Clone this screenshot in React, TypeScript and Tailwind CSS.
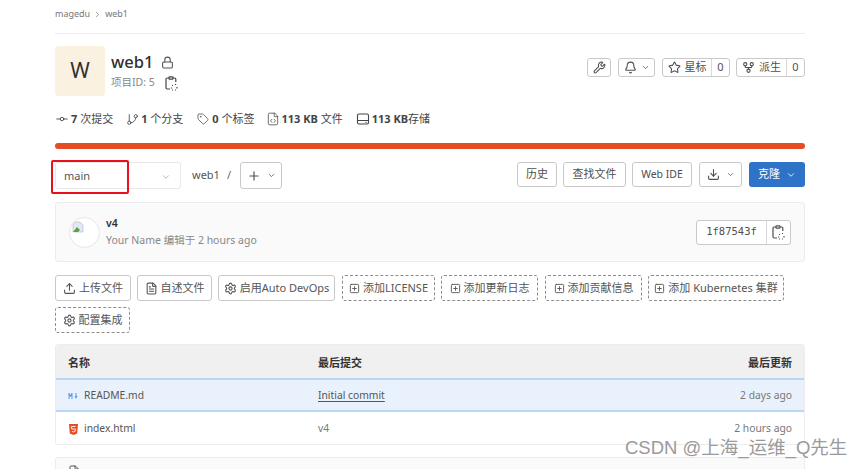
import React from 'react';
import {
  Lock, GitCommitHorizontal, GitBranch, Tag, FileCode, ChevronDown, ChevronRight,
  Plus, Wrench, Bell, Star, GitFork, Download, Upload, FileText, Settings, SquarePlus,
} from 'lucide-react';

const btn = 'flex items-center justify-center rounded-[3px] border border-[#c9c9c9] bg-white text-[#4f4f4f]';

// clipboard with the dashed corner, lucide has no match for this one
const CopyIcon = ({ className }: { className?: string }) => (
  <svg width="13" height="15" viewBox="0 0 13 15" fill="none" stroke="currentColor" strokeWidth="1.2" className={className}>
    <rect x="4" y="0.8" width="4" height="2.4" rx="0.6" />
    <path d="M4 2H2.2A1.2 1.2 0 0 0 1 3.2v8.6A1.2 1.2 0 0 0 2.2 13H5M8 2h1.6a1.2 1.2 0 0 1 1.2 1.2V6" />
    <path d="M7 9.5h1M10.5 8v1M12 11v1.5M7 14h1M10 14h1M6.5 11.5v1" />
  </svg>
);

const StorageIcon = () => (
  <svg width="14" height="14" viewBox="0 0 14 14" fill="none" stroke="currentColor" strokeWidth="1.1">
    <rect x="1.5" y="2" width="11" height="10" rx="1.5" />
    <path d="M1.5 8.5h11M9.5 10.3h1.2" />
  </svg>
);

const ActionButton = ({ icon, label, dashed, className }: { icon: React.ReactNode; label: string; dashed?: boolean; className: string }) => (
  <div className={`flex h-[26px] items-center justify-center gap-[3px] rounded-[3px] border bg-white text-[11px] text-[#555] ${dashed ? 'border-dashed border-[#8c8c8c]' : 'border-[#c9c9c9]'} ${className}`}>
    {icon}
    <span>{label}</span>
  </div>
);

const Stat = ({ icon, num, text, className }: { icon: React.ReactNode; num: string; text: string; className?: string }) => (
  <div className={`flex items-center gap-[2px] text-[11px] text-[#444] ${className ?? ''}`}>
    <span className="flex w-[14px] justify-center">{icon}</span>
    <span><b className="font-bold">{num}</b>{text}</span>
  </div>
);

const App = () => {
  return (
    <div className="relative h-[469px] w-[865px] overflow-hidden bg-white font-['Noto_Sans','Noto_Sans_CJK_SC',sans-serif]">
      <div className="ml-[55px] w-[750px]">
        {/* Breadcrumb */}
        <div className="flex h-[34px] items-center gap-[3px] border-b border-[#ececec] pb-[5px] text-[9px] text-[#777]">
          <span>magedu</span>
          <ChevronRight size={9} />
          <span>web1</span>
        </div>

        {/* Project header */}
        <div className="mt-3 flex items-start justify-between">
          <div className="flex gap-[6px]">
            <div className="flex h-[50px] w-[50px] items-center justify-center rounded-[4px] bg-[#fbf1e0] text-[21px] text-[#303030]">W</div>
            <div>
              <div className="flex h-[28px] items-center gap-[8px] pt-[5px] text-[16.5px] font-medium text-[#303030]">
                web1
                <Lock size={13} className="text-[#555]" />
              </div>
              <div className="flex items-center gap-[10px] text-[10.5px] leading-[17px] text-[#888]">
                <span>项目ID: 5</span>
                <CopyIcon className="mt-[2px] text-[#444]" />
              </div>
            </div>
          </div>
          <div className="mt-[12px] flex">
            <div className={`${btn} h-[19px] w-[24px]`}><Wrench size={13} /></div>
            <div className={`${btn} ml-[7px] h-[19px] w-[37px] gap-1`}><Bell size={13} /><ChevronDown size={9} /></div>
            <div className={`${btn} ml-[7px] h-[19px] w-[68px] text-[11px]`}>
              <div className="flex flex-1 items-center justify-center gap-[4px]"><Star size={13} />星标</div>
              <div className="flex h-full w-[18px] items-center justify-center border-l border-[#d8d8d8]">0</div>
            </div>
            <div className={`${btn} ml-[6px] h-[19px] w-[69px] text-[11px]`}>
              <div className="flex flex-1 items-center justify-center gap-[4px]"><GitFork size={13} />派生</div>
              <div className="flex h-full w-[18px] items-center justify-center border-l border-[#d8d8d8]">0</div>
            </div>
          </div>
        </div>

        {/* Stats */}
        <div className="mt-[14px] flex h-[18px] items-center gap-[13px]">
          <Stat icon={<GitCommitHorizontal size={14} strokeWidth={1.5} />} num="7" text=" 次提交" />
          <Stat className="-ml-[1px]" icon={<GitBranch size={13} strokeWidth={1.5} />} num="1" text=" 个分支" />
          <Stat icon={<Tag size={12} strokeWidth={1.5} />} num="0" text=" 个标签" />
          <Stat className="-ml-[2px]" icon={<FileCode size={14} strokeWidth={1.3} />} num="113 KB" text=" 文件" />
          <Stat icon={<StorageIcon />} num="113 KB" text="存储" />
        </div>

        {/* Language bar */}
        <div className="mt-[15px] h-[6px] rounded-full bg-[#e44d26]" />

        {/* Repo controls */}
        <div className="mt-[13px] flex items-start justify-between">
          <div className="flex items-center">
            <div className="flex h-[27px] w-[126px] items-center justify-between rounded-[3px] border border-[#e8e8e8] pl-2 pr-[9px] pt-[2px] text-[11px] text-[#555]">
              <span>main</span>
              <ChevronDown size={10} className="text-[#aaa]" />
            </div>
            <span className="ml-[11px] text-[11px] text-[#555]">web1</span>
            <span className="ml-[7px] text-[11px] text-[#666]">/</span>
            <div className={`${btn} ml-[9px] h-[27px] w-[42px] gap-[6px] border-[#bbb]`}><Plus size={14} /><ChevronDown size={9} /></div>
          </div>
          <div className="flex text-[11px]">
            <div className={`${btn} h-[25px] w-[40px]`}>历史</div>
            <div className={`${btn} ml-[6px] h-[25px] w-[63px]`}>查找文件</div>
            <div className={`${btn} ml-[6px] h-[25px] w-[60px] text-[10.5px]`}>Web IDE</div>
            <div className={`${btn} ml-[7px] h-[25px] w-[43px] gap-[6px]`}><Download size={13} /><ChevronDown size={9} /></div>
            <div className="ml-[7px] flex h-[25px] w-[56px] items-center justify-center gap-[6px] rounded-[3px] bg-[#2f73c9] text-white">克隆<ChevronDown size={10} /></div>
          </div>
        </div>

        {/* Last commit */}
        <div className="mt-[13px] flex h-[60px] items-center justify-between rounded-[3px] border border-[#ececec] bg-[#fafafa] pl-[13px] pr-[13px]">
          <div className="flex items-center gap-[6px]">
            <div className="relative h-[31px] w-[31px] overflow-hidden rounded-full border border-[#e6e6e6] bg-white">
              <svg width="12" height="12" viewBox="0 0 12 12" className="absolute left-[2px] top-[3px]">
                <path d="M1 1h7l3 3v7H1z" fill="#dfe8f5" stroke="#b5b5b5" strokeWidth="0.6" />
                <path d="M1 11l4-5 3 3-2 2z" fill="#5aa04a" />
              </svg>
            </div>
            <div>
              <div className="text-[10.5px] font-semibold leading-[17px] text-[#333]">v4</div>
              <div className="text-[10.5px] leading-[17px] text-[#888]">Your Name 编辑于 2 hours ago</div>
            </div>
          </div>
          <div className="flex h-[25px] items-center rounded-[3px] border border-[#c9c9c9] bg-white text-[#4f4f4f]">
            <div className="flex h-full w-[70px] items-center justify-center border-r border-[#d8d8d8] font-['DejaVu_Sans_Mono',monospace] text-[10.5px]">1f87543f</div>
            <div className="flex w-[23px] justify-center"><CopyIcon /></div>
          </div>
        </div>

        {/* Actions */}
        <div className="mt-[13px] flex flex-wrap gap-y-[6px]">
          <ActionButton className="w-[76px]" icon={<Upload size={13} />} label="上传文件" />
          <ActionButton className="ml-[6px] w-[75px]" icon={<FileText size={13} />} label="自述文件" />
          <ActionButton className="ml-[6px] w-[117px]" icon={<Settings size={13} />} label="启用Auto DevOps" />
          <ActionButton dashed className="ml-[7px] w-[93px]" icon={<SquarePlus size={11} />} label="添加LICENSE" />
          <ActionButton dashed className="ml-[6px] w-[97px]" icon={<SquarePlus size={11} />} label="添加更新日志" />
          <ActionButton dashed className="ml-[7px] w-[97px]" icon={<SquarePlus size={11} />} label="添加贡献信息" />
          <ActionButton dashed className="ml-[6px] w-[136px]" icon={<SquarePlus size={11} />} label="添加 Kubernetes 集群" />
          <ActionButton dashed className="w-[75px]" icon={<Settings size={13} />} label="配置集成" />
        </div>

        {/* File table */}
        <div className="mt-[11px] overflow-hidden rounded-[3px] border border-[#ececec] text-[10.3px] text-[#555]">
          <div className="flex h-[33px] items-center bg-[#f0f0f0] px-3 pt-[3px] text-[11px] font-bold text-[#333]">
            <span className="w-[250px]">名称</span>
            <span className="flex-1">最后提交</span>
            <span>最后更新</span>
          </div>
          <div className="flex h-[34px] items-center border-y-2 border-y-[#b9d6f5] bg-[#e9f2fc] px-3 pt-[1px]">
            <span className="flex w-[250px] items-center gap-[5px]">
              <svg width="11" height="6" viewBox="0 0 10 6" fill="#5b9be6"><path d="M0 0h1l1 2 1-2h1v6H3V3L2 4 1 3v3H0zM6 3h1V0h1v3h1L7.5 6z" /></svg>
              README.md
            </span>
            <span className="flex-1 underline underline-offset-2">Initial commit</span>
            <span className="text-[#777]">2 days ago</span>
          </div>
          <div className="flex h-[32px] items-center bg-white px-3 pt-[2px]">
            <span className="flex w-[250px] items-center gap-[5px]">
              <svg width="11" height="11" viewBox="0 0 10 11"><path d="M0.5 0h9l-0.8 9.5L5 11l-3.7-1.5z" fill="#e44d26" /><path d="M7 2.5H3l0.2 2.5h3.6l-0.2 2.3L5 8l-1.6-0.7" fill="none" stroke="#fff" strokeWidth="0.9" /></svg>
              index.html
            </span>
            <span className="flex-1 text-[#777]">v4</span>
            <span className="text-[#777]">2 hours ago</span>
          </div>
        </div>

        {/* README box peeking in at the bottom */}
        <div className="mt-[12px] flex h-[30px] items-start rounded-t-[3px] border border-[#ececec] bg-[#fafafa] pl-3 pt-[7px]">
          <FileText size={12} className="text-[#555]" />
        </div>
      </div>

      {/* Screenshot annotation */}
      <div className="absolute left-[51px] top-[160px] h-[34px] w-[78px] rounded-[2px] border-2 border-[#e8111b]" />

      {/* Watermark */}
      <div className="absolute left-[625px] top-[435px] font-['Liberation_Sans','Noto_Sans_CJK_SC',sans-serif] text-[18.5px] leading-[26px] text-[#9a9a9a]">CSDN @上海_运维_Q先生</div>
    </div>
  );
};

export default App;
